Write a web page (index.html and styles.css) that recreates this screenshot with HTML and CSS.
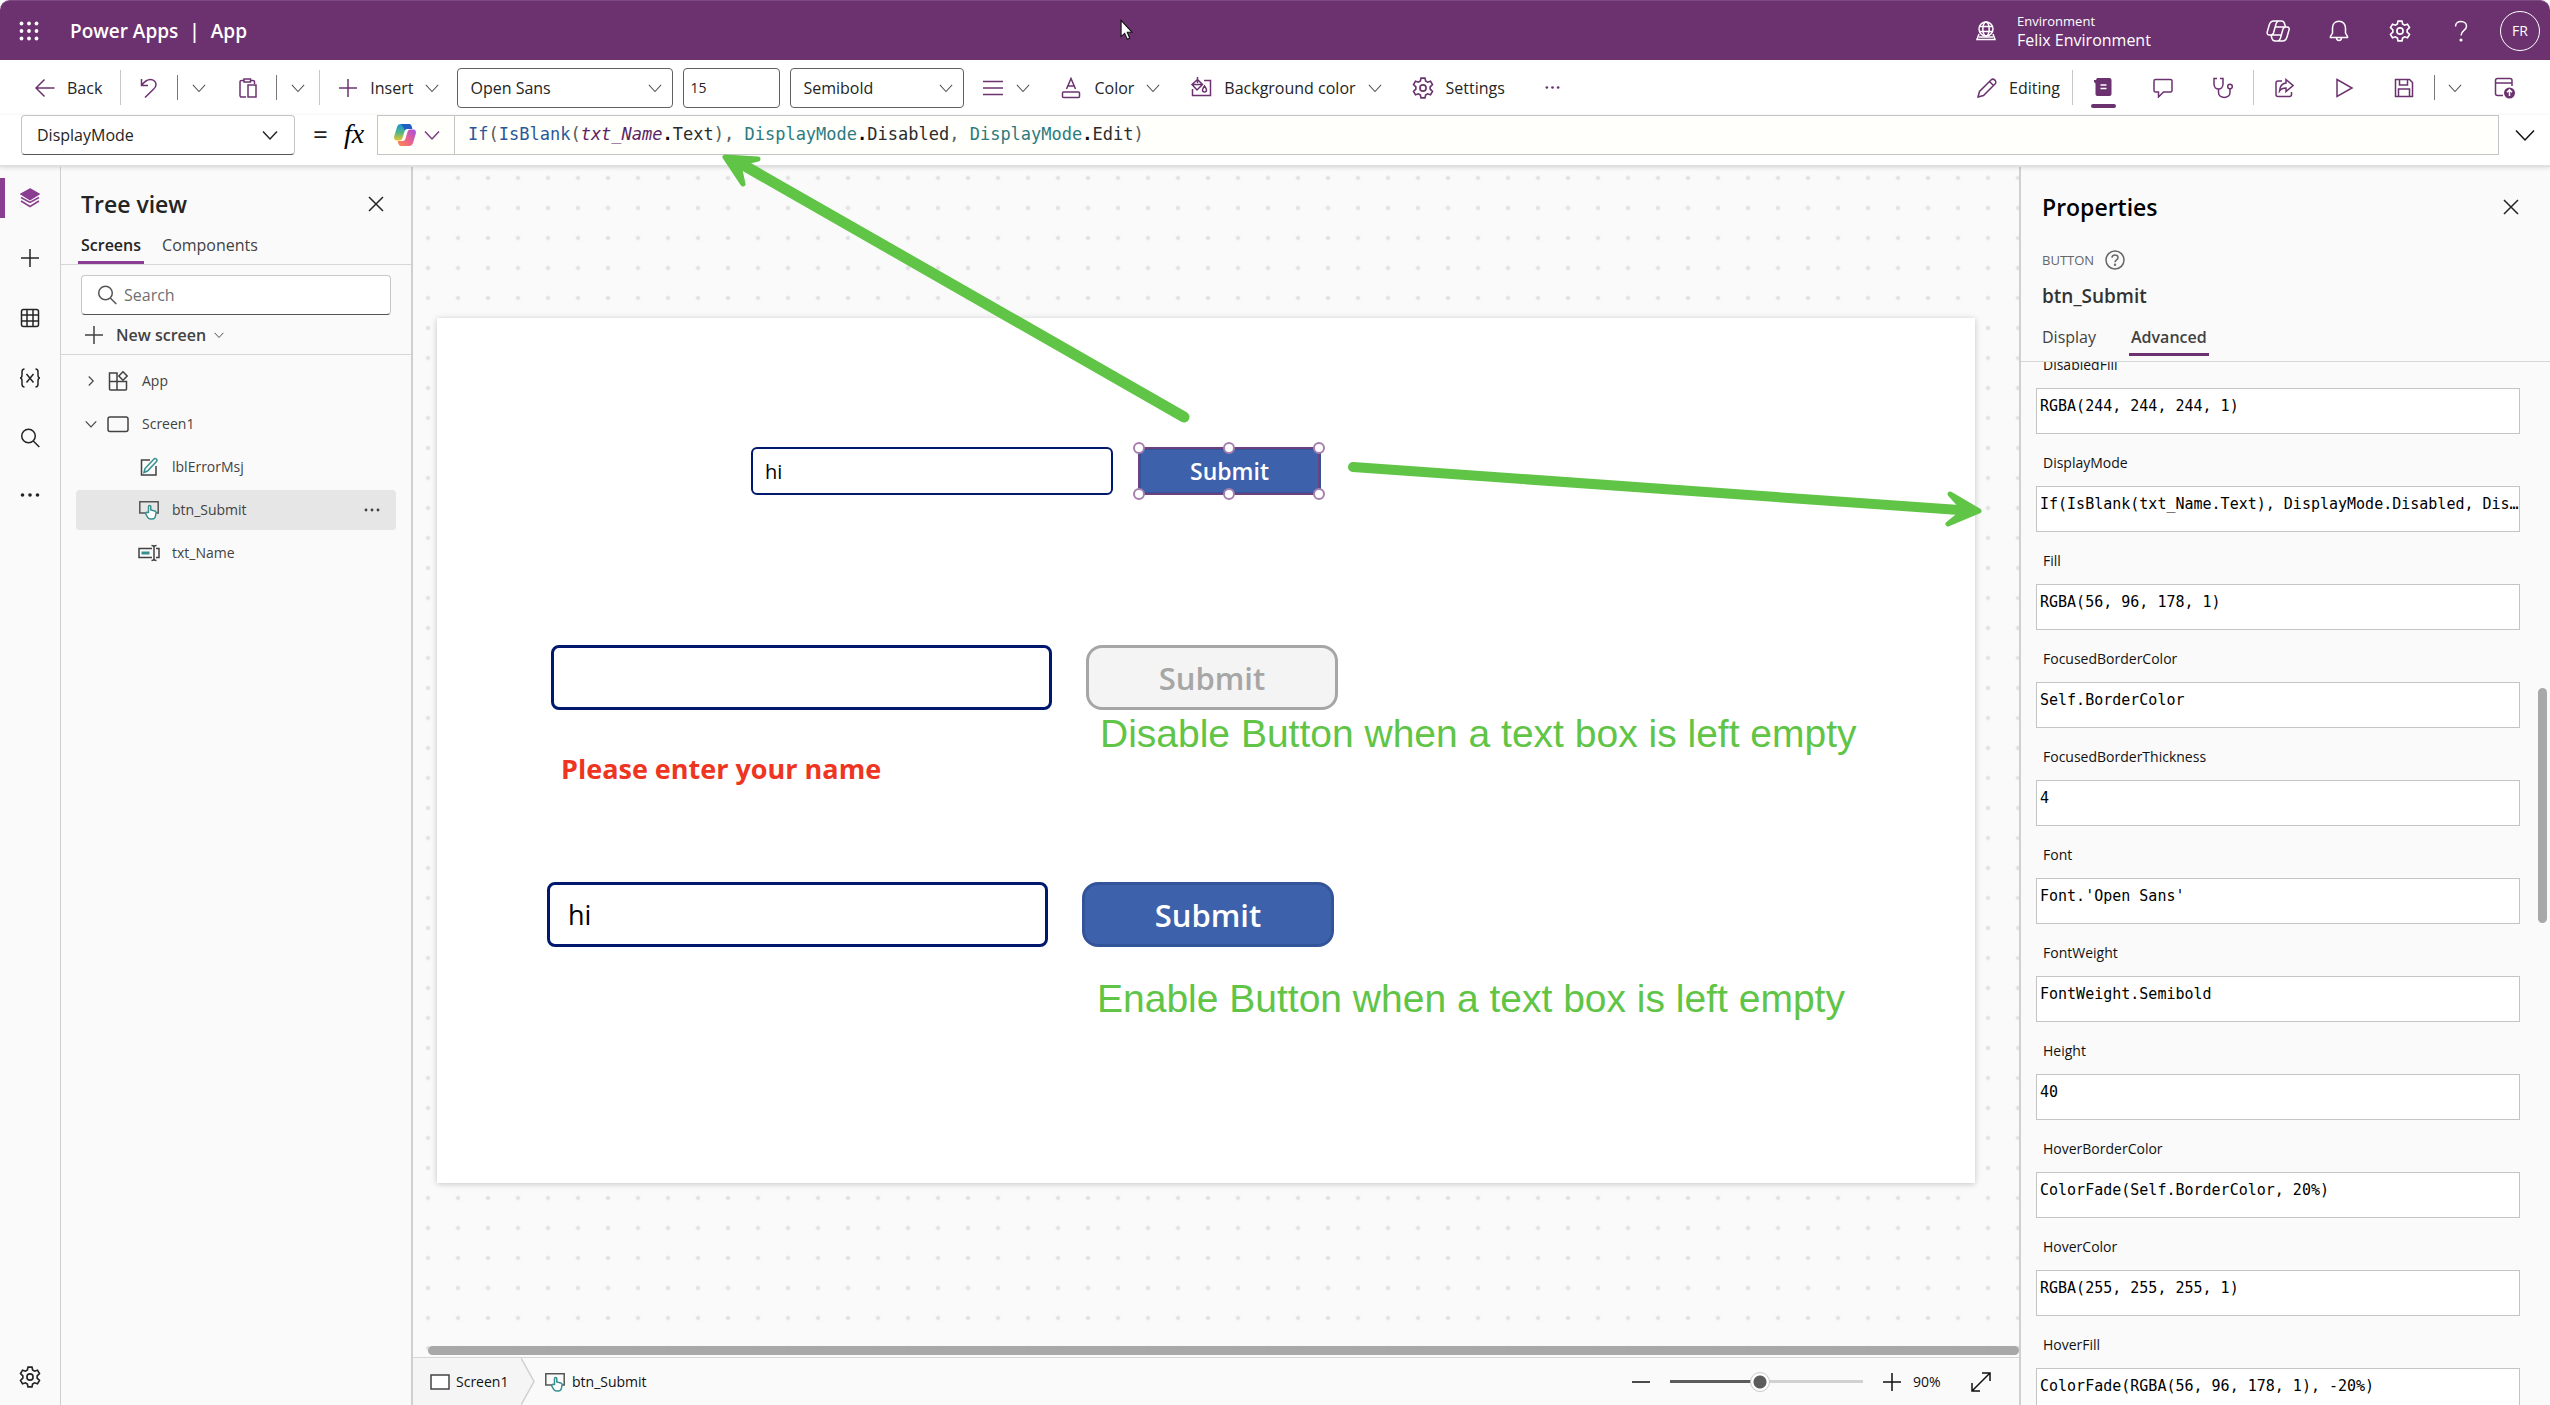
FILE: index.html
```html
<!DOCTYPE html>
<html lang="en">
<head>
<meta charset="utf-8">
<title>Power Apps | App</title>
<link rel="stylesheet" href="styles.css">
</head>
<body>
<svg class="sprite" aria-hidden="true">
  <symbol id="chev" viewBox="0 0 16 16"><path d="M1 4.500 8 12l7-7.500"/></symbol>
  <symbol id="chev-r" viewBox="0 0 16 16"><path d="M5 2l6 6-6 6"/></symbol>
  <symbol id="plus" viewBox="0 0 20 20"><path d="M10 1v18M1 10h18"/></symbol>
  <symbol id="close" viewBox="0 0 16 16"><path d="M1 1l14 14M15 1 1 15"/></symbol>
  <symbol id="glass" viewBox="0 0 20 20"><circle cx="8.500" cy="8" r="6.800"/><path d="M13.300 13l6 6"/></symbol>
  <symbol id="dots" viewBox="0 0 20 20"><g fill="currentColor" stroke="none"><circle cx="2.500" cy="10" r="1.800"/><circle cx="10" cy="10" r="1.800"/><circle cx="17.500" cy="10" r="1.800"/></g></symbol>
  <symbol id="gear" viewBox="0 0 20 20"><path d="M8.200 1h3.600l.6 2.700 1.700 1 2.700-.9 1.800 3.200-2.100 1.900v2.200l2.100 1.900-1.800 3.200-2.700-.9-1.700 1-.6 2.700H8.200l-.6-2.700-1.700-1-2.700.9L1.400 13l2.100-1.900V8.900L1.400 7l1.800-3.200 2.700.9 1.700-1z"/><circle cx="10" cy="10" r="2.800"/></symbol>
  <symbol id="tap" viewBox="0 0 20 20"><path d="M7 13H.8V1.800h18.400V13H17" stroke="#555"/><path d="M9.500 12.500V6.800c0-1.700 2.300-1.700 2.300 0V10l4 .9c.9.200 1.300.9 1.200 1.800l-.5 3.300c-.3 1.800-1.500 3-3.300 3h-1.500c-1.300 0-2.300-.6-3-1.700l-2-3.300c-.5-1.200.7-2 1.600-1.400z" stroke="#35908e" fill="#fff"/></symbol>
</svg>

<div class="app">
<header class="top">
  <button class="waffle" aria-label="App launcher"><svg width="20" height="20" viewBox="0 0 20 20"><g fill="#fff" stroke="none"><circle cx="2.500" cy="2.500" r="1.900"/><circle cx="10" cy="2.500" r="1.900"/><circle cx="17.500" cy="2.500" r="1.900"/><circle cx="2.500" cy="10" r="1.900"/><circle cx="10" cy="10" r="1.900"/><circle cx="17.500" cy="10" r="1.900"/><circle cx="2.500" cy="17.500" r="1.900"/><circle cx="10" cy="17.500" r="1.900"/><circle cx="17.500" cy="17.500" r="1.900"/></g></svg></button>
  <h1 class="brand"><span>Power Apps</span><span>|</span><span>App</span></h1>
  <div class="env">
    <svg width="22" height="20" viewBox="0 0 22 20"><circle cx="11" cy="8" r="7"/><ellipse cx="11" cy="8" rx="3.200" ry="7"/><path d="M4.300 5.500h13.400M4.300 10.500h13.400M4 13l-2 5.500h18L18 13M4 16h14"/></svg>
    <div class="env-text"><span class="env-cap">Environment</span><span>Felix Environment</span></div>
  </div>
  <button class="top-btn" aria-label="Copilot"><svg width="24" height="22" viewBox="0 0 24 22"><path d="M9 1h6.500c2 0 2.500 1 3 2.500l1 3.500h1.500c2 0 2.500 1.500 2 3l-2 7c-.7 2.500-2 4-4.500 4H9c-2 0-2.500-1-3-2.500L5 15H3.500c-2 0-2.700-1.500-2.200-3.200l2-7C4 2.500 5.500 1 8 1h1M12.500 1c-1.500.5-2 1.500-2.500 3L7.500 13c-.4 1.300-1 2-2.500 2M19.500 7c-1.500 0-2 .7-2.500 2l-2.500 9c-.5 1.500-1 2.500-2.500 3M9.500 7h10M5 15h10"/></svg></button>
  <button class="top-btn" aria-label="Notifications"><svg width="20" height="22" viewBox="0 0 20 22"><path d="M10 1.200c-4 0-6.500 3-6.500 6.800v5L1.500 16.500v1h17v-1L16.500 13V8c0-3.800-2.500-6.800-6.500-6.800zM7.500 17.500c0 1.700 1 3 2.500 3s2.500-1.300 2.500-3"/></svg></button>
  <button class="top-btn" aria-label="Settings"><svg width="22" height="22"><use href="#gear"/></svg></button>
  <button class="top-btn" aria-label="Help"><svg width="16" height="22" viewBox="0 0 16 22"><path d="M2.500 6.500c0-3.300 2.300-5 5.500-5s5.500 2 5.500 4.800c0 4.200-5.500 4.200-5.500 9.200"/><circle cx="8" cy="20" r=".8" fill="#fff"/></svg></button>
  <button class="avatar" aria-label="Account">FR</button>
</header>

<div class="toolbar">
  <button class="tool"><svg width="20" height="20" viewBox="0 0 20 20"><path d="M19.500 10H1M9.500 1.500 1 10l8.500 8.500"/></svg>Back</button>
  <i class="sep"></i>
  <button class="tool" aria-label="Undo"><svg width="20" height="20" viewBox="0 0 20 20"><path d="M2.500 1v6.500H9M2.500 7.500C5 4 8 1.500 11.500 1.500c3 0 5.500 2.200 5.500 5 0 2-1 3.300-2.300 4.500L6 19.500"/></svg></button>
  <i class="sep short"></i>
  <button class="drop" aria-label="Undo options"><svg width="14" height="14"><use href="#chev"/></svg></button>
  <button class="tool" aria-label="Paste"><svg width="20" height="20" viewBox="0 0 20 20"><path d="M8 19H3.500c-.8 0-1.500-.6-1.500-1.400V3.800c0-.8.700-1.400 1.500-1.400H6M12.500 2.400H15c.8 0 1.500.6 1.500 1.400V6M6 1h6.500v3H6zM10 7h8v12h-8z"/></svg></button>
  <i class="sep short"></i>
  <button class="drop" aria-label="Paste options"><svg width="14" height="14"><use href="#chev"/></svg></button>
  <i class="sep"></i>
  <button class="tool"><svg width="20" height="20"><use href="#plus"/></svg>Insert<svg class="gray" width="14" height="14"><use href="#chev"/></svg></button>
  <div class="fields">
    <div class="select wide"><select aria-label="Font"><option>Open Sans</option></select><svg width="14" height="14"><use href="#chev"/></svg></div>
    <input class="size" aria-label="Font size" value="15">
    <div class="select mid"><select aria-label="Font weight"><option>Semibold</option></select><svg width="14" height="14"><use href="#chev"/></svg></div>
  </div>
  <div class="format">
    <button aria-label="Align"><svg width="22" height="20" viewBox="0 0 22 20"><path d="M1 3.500h20M1 10h20M1 16.500h20"/></svg><svg class="gray" width="14" height="14"><use href="#chev"/></svg></button>
    <button><svg width="22" height="22" viewBox="0 0 22 22"><path d="M6.500 12 11 1.500 15.500 12M8 9h6"/><rect x="2.500" y="15" width="17" height="5.500" rx="1"/></svg>Color<svg class="gray" width="14" height="14"><use href="#chev"/></svg></button>
    <button><svg width="22" height="22" viewBox="0 0 22 22"><path d="M14 3.500h6.500v15h-18V12M7.500 0v6M2 7.500l5.500-5 5 5-5.500 5.500zM2 7.500h10"/><path d="M14.500 9c1.300 1.800 2 3 2 4a2 2 0 0 1-4 0c0-1 .7-2.200 2-4z"/></svg>Background color<svg class="gray" width="14" height="14"><use href="#chev"/></svg></button>
    <button><svg width="22" height="22"><use href="#gear"/></svg>Settings</button>
    <button class="more" aria-label="More"><svg width="15" height="15"><use href="#dots"/></svg></button>
  </div>
  <button class="editing"><svg width="20" height="20" viewBox="0 0 20 20"><path d="M1 19l1.500-5.500L14 2c2.500-2.500 6.500 1.500 4 4L6.500 17.500zM12.500 3.500l4 4"/></svg>Editing</button>
  <i class="sep"></i>
  <button class="tool-icon on" aria-label="Formula bar"><svg width="20" height="20" viewBox="0 0 20 20"><path d="M4 1h12.500c1 0 2 .8 2 2v14c0 1.200-1 2-2 2h-12c-1.200 0-2-.8-2-2V6.500L1 5V3h2z" fill="#6c3270" stroke="none"/><path d="M7.500 8h6M7.500 11.500h6" stroke="#fff"/></svg></button>
  <button class="tool-icon" aria-label="Comments"><svg width="20" height="20" viewBox="0 0 20 20"><path d="M2.500 1.500h15c.8 0 1.500.7 1.500 1.500v9.500c0 .8-.7 1.500-1.500 1.500h-7L5.500 19v-5h-3c-.8 0-1.500-.7-1.500-1.500V3c0-.8.700-1.500 1.500-1.500z"/></svg></button>
  <button class="tool-icon" aria-label="App checker"><svg width="22" height="22" viewBox="0 0 22 22"><path d="M5 1.500H2v5.500c0 3 2 5 4.500 5s4.500-2 4.500-5V1.500H8M6.500 12v3.500c0 6.500 11.500 6.500 11.500 0V12"/><circle cx="18" cy="9.500" r="2.300"/></svg></button>
  <i class="sep"></i>
  <button class="tool-icon" aria-label="Share"><svg width="20" height="20" viewBox="0 0 20 20"><path d="M8 3H4C2.800 3 2 3.800 2 5v11.500c0 1.200.8 2 2 2h11.500c1.200 0 2-.8 2-2V14M12 1.500l7 6-7 6V10c-3 0-5 .8-6.500 3 .3-4.500 2.500-7.500 6.500-8z"/></svg></button>
  <button class="tool-icon" aria-label="Preview"><svg width="20" height="20" viewBox="0 0 20 20"><path d="M3 1.500 18 10 3 18.500z"/></svg></button>
  <button class="tool-icon" aria-label="Save"><svg width="20" height="20" viewBox="0 0 20 20"><path d="M1.500 1.500h14L18.500 4.500v14h-17zM5.500 1.500v5.500h8V1.500M4.500 18.500V11h11v7.500"/></svg></button>
  <i class="sep short"></i>
  <button class="tool-icon narrow" aria-label="Save options"><svg class="gray" width="14" height="14"><use href="#chev"/></svg></button>
  <button class="tool-icon" aria-label="Publish"><svg width="22" height="22" viewBox="0 0 22 22"><path d="M9 18.500H3.500c-1 0-2-.8-2-2V3.500c0-1 .8-2 2-2h12.500c1.200 0 2 1 2 2V9M1.500 6H18"/><circle cx="15.500" cy="16" r="5.500" fill="#6c3270" stroke="none"/><path d="M15.500 19v-6M13 15.300l2.500-2.500 2.500 2.500" stroke="#fff"/></svg></button>
</div>

<div class="formula">
  <div class="select prop"><select aria-label="Property"><option>DisplayMode</option></select><svg width="16" height="16"><use href="#chev"/></svg></div>
  <div class="eq"><span>=</span><span class="fx">fx</span></div>
  <div class="bar">
    <button class="copilot" aria-label="Copilot"><svg width="24" height="24" viewBox="0 0 24 24"><defs><linearGradient id="ca" x1="0" y1="0" x2="0" y2="1"><stop offset="0" stop-color="#1b8fd8"/><stop offset=".5" stop-color="#4fb58a"/><stop offset="1" stop-color="#e8c62c"/></linearGradient><linearGradient id="cb" x1="1" y1="0" x2="0" y2="1"><stop offset="0" stop-color="#a050e8"/><stop offset=".5" stop-color="#e8608f"/><stop offset="1" stop-color="#ff8a4a"/></linearGradient></defs><path d="M8 1h8c1.500 0 2.200 1 2.600 2.500L19.300 6H14c-1.500 0-2 1-2.500 2.500L9.500 15c-.5 1.500-1 2.500-3 2.500H4.500C1.500 17.500.5 15.500 1.300 13L4 4c.7-2 2-3 4-3z" fill="url(#ca)" stroke="none"/><path d="M8 1h8c1.500 0 2.200 1 2.600 2.500L19.300 6H14c-1 0-1.700.5-2 1.500L9.500 3z" fill="#1f5fc4" stroke="none"/><path d="M16 23H8c-1.500 0-2.200-1-2.600-2.500L4.700 18H10c1.500 0 2-1 2.500-2.500L14.500 9c.5-1.500 1-2.500 3-2.500h2c3 0 4 2 3.200 4.500L20 20c-.7 2-2 3-4 3z" fill="url(#cb)" stroke="none"/></svg><svg width="16" height="16"><use href="#chev"/></svg></button>
    <div class="code" role="textbox" aria-label="Formula"><span class="fn">If</span>(<span class="fn">IsBlank</span>(<span class="id">txt_Name</span><b>.</b><span class="m">Text</span>), <span class="en">DisplayMode</span><b>.</b><span class="m">Disabled</span>, <span class="en">DisplayMode</span><b>.</b><span class="m">Edit</span>)</div>
  </div>
  <button class="expand" aria-label="Expand formula bar"><svg width="20" height="20" viewBox="0 0 20 20"><path d="M1 5.500 10 15l9-9.500"/></svg></button>
</div>

<div class="work">
  <nav class="rail" aria-label="Panes">
    <button class="on" aria-label="Tree view"><svg width="20" height="20" viewBox="0 0 20 20"><path d="M10 1 19 6l-9 5.500L1 6z" fill="currentColor"/><path d="M1 9.500l9 5 9-5M1 13l9 5.500 9-5.500"/></svg></button>
    <button aria-label="Insert"><svg width="20" height="20"><use href="#plus"/></svg></button>
    <button aria-label="Data"><svg width="20" height="20" viewBox="0 0 20 20"><rect x="1.500" y="1.500" width="17" height="17" rx="2"/><path d="M7 1.500v17M13 1.500v17M1.500 7h17M1.500 13h17"/></svg></button>
    <button aria-label="Variables"><svg width="22" height="20" viewBox="0 0 22 20"><path d="M5.500 1C3 1 3 2.500 3 4v3c0 2-1 3-2 3 1 0 2 1 2 3v3c0 1.500 0 3 2.500 3M16.500 1C19 1 19 2.500 19 4v3c0 2 1 3 2 3-1 0-2 1-2 3v3c0 1.500 0 3-2.500 3M7.500 6l7 8.500M14.500 6l-7 8.500"/></svg></button>
    <button aria-label="Search"><svg width="20" height="20"><use href="#glass"/></svg></button>
    <button class="etc" aria-label="More"><svg width="20" height="20"><use href="#dots"/></svg></button>
    <button class="last" aria-label="Settings"><svg width="22" height="22"><use href="#gear"/></svg></button>
  </nav>

  <aside class="tree">
    <div class="head"><h2>Tree view</h2><button aria-label="Close tree view"><svg width="16" height="16"><use href="#close"/></svg></button></div>
    <div class="tabs"><button class="on">Screens</button><button>Components</button></div>
    <label class="search"><svg width="20" height="20"><use href="#glass"/></svg><input placeholder="Search" aria-label="Search"></label>
    <button class="new"><svg width="20" height="20"><use href="#plus"/></svg>New screen<svg width="10" height="10"><use href="#chev"/></svg></button>
    <ul class="nodes">
      <li><svg width="12" height="12"><use href="#chev-r"/></svg><svg width="22" height="20" viewBox="0 0 22 20"><path d="M2.500 2h7.500v17H3.500c-.6 0-1-.4-1-1zM2.500 10.500h17V18c0 .6-.4 1-1 1H10"/><path d="M16 .8l4.200 4.200L16 9.200 11.800 5z"/></svg><span>App</span></li>
      <li><svg width="12" height="12"><use href="#chev"/></svg><svg width="22" height="20" viewBox="0 0 22 20"><rect x="1" y="3" width="20" height="14.500" rx="2"/></svg><span>Screen1</span></li>
      <li class="child"><svg width="22" height="20" viewBox="0 0 22 20"><path d="M12 3H3.500v15H18V9"/><path d="M6 15.500l1-4L16 2c1.500-1.500 4 .8 2.500 2.500L9.500 14z" stroke="#35908e"/></svg><span>lblErrorMsj</span></li>
      <li class="child sel"><svg width="22" height="20"><use href="#tap"/></svg><span>btn_Submit</span><button aria-label="More actions"><svg width="16" height="16"><use href="#dots"/></svg></button></li>
      <li class="child"><svg width="22" height="20" viewBox="0 0 22 20"><path d="M14 5.500H1v9h13M18 5.500h3v9h-3M16 4v12M13.500 2.500c1.500 0 2.500.5 2.500 1.500 0-1 1-1.500 2.500-1.500M13.500 17.500c1.500 0 2.500-.5 2.500-1.500 0 1 1 1.500 2.500 1.500"/><path d="M3.500 10h8" stroke="#35908e" stroke-width="3"/></svg><span>txt_Name</span></li>
    </ul>
  </aside>

  <main class="stage">
    <div class="dots">
      <div class="screen">
        <input class="box small" aria-label="Name" value="hi">
        <button class="submit small">Submit</button>
        <svg class="handles" width="196" height="62" viewBox="0 0 196 62"><rect x="8" y="8" width="180" height="46" rx="4" stroke="#6d417f"/><g fill="#fff" stroke="#a67fad"><circle cx="8" cy="8" r="5"/><circle cx="98" cy="8" r="5"/><circle cx="188" cy="8" r="5"/><circle cx="8" cy="54" r="5"/><circle cx="98" cy="54" r="5"/><circle cx="188" cy="54" r="5"/></g></svg>
        <input class="box empty" aria-label="Name, empty">
        <button class="submit off" disabled>Submit</button>
        <p class="error">Please enter your name</p>
        <p class="note first">Disable Button when a text box is left empty</p>
        <input class="box filled" aria-label="Name, filled" value="hi">
        <button class="submit ready">Submit</button>
        <p class="note second">Enable Button when a text box is left empty</p>
      </div>
      <div class="hscroll"></div>
    </div>
    <footer class="status">
      <a class="crumb" href="#"><svg width="20" height="16" viewBox="0 0 20 16"><rect x="1" y="1" width="18" height="14" fill="#fff" stroke="#444"/></svg>Screen1</a>
      <svg class="wedge" width="14" height="47" viewBox="0 0 14 47"><path d="M0 0l13 23.500L0 47z" fill="#f5f5f5" stroke="none"/><path d="M0 0l13 23.500L0 47" stroke="#d0d0d0"/></svg>
      <a class="crumb cur" href="#"><svg width="20" height="20"><use href="#tap"/></svg>btn_Submit</a>
      <div class="zoom">
        <button aria-label="Zoom out"><svg width="20" height="20" viewBox="0 0 20 20"><path d="M1 10h18"/></svg></button>
        <input type="range" min="0" max="100" value="46" aria-label="Zoom">
        <button aria-label="Zoom in"><svg width="20" height="20"><use href="#plus"/></svg></button>
        <span>90%</span>
        <button aria-label="Fit to window"><svg width="20" height="20" viewBox="0 0 20 20"><path d="M1 19 19 1M11 1h8v8M1 11v8h8"/></svg></button>
      </div>
    </footer>
  </main>

  <aside class="props">
    <div class="head"><h2>Properties</h2><button aria-label="Close properties"><svg width="16" height="16"><use href="#close"/></svg></button></div>
    <div class="kind">BUTTON<svg width="20" height="20" viewBox="0 0 20 20"><circle cx="10" cy="10" r="9"/><path d="M7 7.800C7 6 8.200 5 10 5s3 1.100 3 2.700c0 2.200-3 2.200-3 4.600"/><circle cx="10" cy="14.800" r=".5"/></svg></div>
    <h3>btn_Submit</h3>
    <div class="tabs"><button>Display</button><button class="on">Advanced</button></div>
    <div class="scroll">
      <div class="list">
        <label>DisabledFill<input value="RGBA(244, 244, 244, 1)"></label>
        <label>DisplayMode<input value="If(IsBlank(txt_Name.Text), DisplayMode.Disabled, DisplayMode.Edit)"></label>
        <label>Fill<input value="RGBA(56, 96, 178, 1)"></label>
        <label>FocusedBorderColor<input value="Self.BorderColor"></label>
        <label>FocusedBorderThickness<input value="4"></label>
        <label>Font<input value="Font.'Open Sans'"></label>
        <label>FontWeight<input value="FontWeight.Semibold"></label>
        <label>Height<input value="40"></label>
        <label>HoverBorderColor<input value="ColorFade(Self.BorderColor, 20%)"></label>
        <label>HoverColor<input value="RGBA(255, 255, 255, 1)"></label>
        <label>HoverFill<input value="ColorFade(RGBA(56, 96, 178, 1), -20%)"></label>
      </div>
      <div class="vscroll"></div>
    </div>
  </aside>
</div>

<svg class="arrow one" width="470" height="272" viewBox="0 0 470 272"><path d="M464 265 25 14" stroke-width="11"/><path d="M5 5 38 7 25 10 20 18 23 32z" class="barb"/></svg>
<svg class="arrow two" width="636" height="76" viewBox="0 0 636 76"><path d="M5 13 611 56" stroke-width="10"/><path d="M631 57 602 40 611 50 611 61 600 70z" class="barb"/></svg>
<svg class="pointer" width="13" height="21" viewBox="0 0 12 19"><path d="M1 1v15l3.300-3 2.400 5.500 2.300-1L6.700 12H11z" fill="#fff" stroke="#111"/></svg>
</div>
</body>
</html>
```

FILE: styles.css
```css
* { box-sizing: border-box; }
body { margin: 0; font-family: "Open Sans", "Noto Sans", sans-serif; font-size: 16px; line-height: 20px; color: #242424; background: #fafafa; }
button { font: inherit; color: inherit; background: none; border: 0; padding: 0; display: flex; align-items: center; }
input, select { font: inherit; color: inherit; border: 0; background: none; outline: 0; min-width: 0; }
h1, h2, h3, p, ul { margin: 0; padding: 0; list-style: none; }
svg { flex: none; fill: none; stroke: currentColor; stroke-width: 1.5; }
.sprite { position: absolute; width: 0; height: 0; }
.app { position: relative; display: flex; flex-direction: column; height: 100vh; overflow: hidden; }

/* purple title bar */
.top { flex: none; display: flex; align-items: center; height: 60px; padding: 0 10px 0 19px; color: #fff; background: #6c3270; border-top: 1px solid #7d4a81; border-radius: 10px 10px 0 0; }
.brand { display: flex; gap: 11px; margin-left: 31px; font-size: 19px; font-weight: 600; }
.env { display: flex; align-items: center; gap: 20px; margin-left: auto; }
.env-text { display: flex; flex-direction: column; width: 230px; font-size: 16px; }
.env-cap { font-size: 13px; line-height: 18px; }
.top-btn { justify-content: center; width: 61px; height: 59px; }
.avatar { justify-content: center; width: 40px; height: 40px; margin-left: 9px; font-size: 14px; border: 1px solid #fff; border-radius: 50%; }

/* command bar */
.toolbar { flex: none; display: flex; align-items: center; height: 55px; padding: 0 15px 0 17px; background: #fff; }
.toolbar svg { color: #6c3270; }
.toolbar .drop svg, .toolbar .select svg, .toolbar svg.gray { color: #555; stroke-width: 1.2; }
.sep { flex: none; width: 1px; height: 35px; background: #c8c8c8; }
.sep.short { height: 25px; background: #777; }
.tool { gap: 12px; padding: 0 18px; }
.drop { padding: 0 14px; }
.fields { display: flex; gap: 10px; align-items: center; }
.select { display: grid; align-items: center; background: #fff; border: 1px solid #616161; border-radius: 4px; height: 40px; }
.select > * { grid-area: 1 / 1; }
.select select { appearance: none; height: 38px; padding: 0 30px 0 12px; }
.select svg { justify-self: end; margin-right: 10px; pointer-events: none; }
.select.wide { width: 216px; }
.select.mid { width: 174px; }
.size { width: 97px; height: 40px; padding: 0 6px; font-size: 14px; border: 1px solid #616161; border-radius: 4px; }
.format { display: flex; gap: 30px; padding-left: 18px; }
.format button { gap: 12px; }
.format .more { padding-left: 10px; }
.editing { gap: 12px; margin-left: auto; padding-right: 12px; }
.tool-icon { justify-content: center; width: 60px; height: 46px; }
.tool-icon.narrow { width: 40px; }
.tool-icon.on { flex-direction: column; gap: 7px; padding-top: 10px; }
.tool-icon.on::after { content: ""; width: 25px; height: 4px; border-radius: 2px; background: #6c3270; }

/* formula bar */
.formula { flex: none; position: relative; display: flex; height: 52px; padding: 0 0 12px 21px; background: #fff; border-bottom: 2px solid #e0e0e0; box-shadow: 0 1px 4px rgba(0,0,0,.12); }
.select.prop { width: 274px; border-color: #c4c4c4; border-bottom-color: #555; }
.select.prop select { padding-left: 15px; }
.select.prop svg { margin-right: 16px; }
.eq { display: flex; align-items: center; gap: 16px; width: 82px; padding-left: 18px; font-size: 26px; }
.fx { font: italic 28px/32px "Liberation Serif", serif; color: #000; }
.bar { flex: 1; display: flex; height: 40px; background: #fffffc; border: 1px solid #c4c4c4; }
.copilot { justify-content: center; gap: 7px; width: 77px; border-right: 1px solid #c4c4c4; color: #7d3a86; }
.code { padding: 8px 13px; font: 17px/20px "DejaVu Sans Mono", monospace; color: #5a5a5a; white-space: pre; }
.fn { color: #2b579a; }
.id { color: #5c2464; font-style: italic; }
.en { color: #2d7a80; }
.m { color: #2b2b2b; }
.code b { color: #000; }
.expand { justify-content: center; width: 51px; height: 40px; color: #111; }

/* work area */
.work { flex: 1; display: flex; min-height: 0; }
.rail { flex: none; display: flex; flex-direction: column; width: 61px; padding-top: 1px; border-right: 1px solid #d0d0d0; }
.rail button { justify-content: center; height: 60px; border-left: 5px solid transparent; border-right: 5px solid transparent; }
.rail .on { color: #8a3d91; background: linear-gradient(#8a3d91, #8a3d91) left center / 5px 40px no-repeat border-box; }
.rail .etc { height: 54px; }
.rail .last { margin-top: auto; height: 56px; }
.head { display: flex; align-items: center; justify-content: space-between; height: 60px; }
h2 { font-size: 23px; line-height: 30px; font-weight: 600; }
.tabs { display: flex; border-bottom: 1px solid #d6d6d6; }
.tree { flex: none; width: 352px; padding-top: 7px; border-right: 2px solid #d0d0d0; }
.tree .head { padding: 0 27px 0 20px; }
.tree .tabs { gap: 15px; height: 31px; padding-left: 17px; color: #424242; }
.tree .tabs button { padding: 0 3px 6px; border-bottom: 3px solid transparent; }
.tree .tabs .on { font-weight: 600; color: #242424; border-color: #8a3d91; }
.search { display: flex; align-items: center; gap: 5px; height: 40px; margin: 10px 20px 0; padding-left: 15px; background: #fff; border: 1px solid #c8c8c8; border-bottom-color: #555; border-radius: 4px; color: #555; }
.search input { flex: 1; }
.search input::placeholder { color: #707070; opacity: 1; }
.new { gap: 12px; width: 100%; height: 40px; padding: 0 23px; font-weight: 600; color: #424242; border-bottom: 1px solid #d6d6d6; }
.new svg:last-child { margin-left: -4px; }
.nodes { display: flex; flex-direction: column; gap: 3px; padding: 6px 15px; font-size: 14px; color: #424242; }
.nodes li { display: flex; align-items: center; gap: 13px; height: 40px; padding: 0 16px 0 9px; }
.nodes li > svg:nth-child(2) { margin-left: -3px; }
.nodes li.child { padding-left: 62px; gap: 12px; }
.nodes .sel { background: #e6e6e6; border-radius: 4px; }
.nodes li button { margin-left: auto; }

/* canvas */
.stage { flex: 1; display: flex; flex-direction: column; min-width: 0; }
.dots { flex: 1; display: flex; flex-direction: column; justify-content: space-between; padding: 151px 0 2px; background: radial-gradient(circle, #e0e0e0 0 1px, transparent 3px) 0 -4px / 30px 30px; }
.screen { position: relative; height: 865px; margin: 0 44px 0 24px; background: #fff; box-shadow: 0 1px 6px rgba(0,0,0,.22); }
.screen > * { position: absolute; }
.box { left: 110px; width: 501px; height: 65px; padding: 0 18px; font-size: 27px; color: #000; background: #fff; border: 3px solid #00186e; border-radius: 8px; }
.box.small { left: 314px; top: 129px; width: 362px; height: 48px; padding: 0 12px; font-size: 20px; border-width: 2px; border-radius: 6px; }
.box.empty { left: 114px; top: 327px; }
.box.filled { top: 564px; }
.submit { justify-content: center; width: 252px; height: 65px; font-size: 31px; font-weight: 600; color: #fff; background: #3e61ac; border: 3px solid #34549a; border-radius: 16px; }
.submit.small { left: 701px; top: 129px; width: 183px; height: 48px; font-size: 23px; border-radius: 5px; }
.submit.off { left: 649px; top: 327px; color: #a6a6a6; background: #f4f4f4; border-color: #a6a6a6; }
.submit.ready { left: 645px; top: 564px; }
.handles { left: 694px; top: 122px; stroke-width: 2; }
.error { left: 124px; top: 434px; font-size: 27px; line-height: 34px; font-weight: 700; color: #ee3522; }
.note { font: 39px/48px "Liberation Sans", sans-serif; color: #60c446; white-space: nowrap; }
.note.first { left: 663px; top: 392px; }
.note.second { left: 660px; top: 657px; }
.hscroll { height: 9px; margin-left: 15px; border-radius: 5px; background: #a8a8a8; }

/* status bar */
.status { flex: none; display: flex; height: 48px; border-top: 1px solid #d6d6d6; font-size: 14px; color: #111; }
.crumb { display: flex; align-items: center; gap: 6px; width: 108px; padding-left: 17px; color: inherit; text-decoration: none; background: #f5f5f5; }
.crumb.cur { gap: 7px; width: auto; padding-left: 10px; background: none; }
.zoom { display: flex; align-items: center; margin-left: auto; padding-right: 28px; }
.zoom input { appearance: none; width: 193px; height: 20px; margin: 0 19px; background: linear-gradient(90deg, #5c5c5c 46%, #d1d1d1 46%) center / 100% 3px no-repeat; }
.zoom input::-webkit-slider-thumb { appearance: none; width: 20px; height: 20px; border-radius: 50%; border: 1px solid #c8c8c8; background: radial-gradient(circle, #5c5c5c 6px, #fff 7px); }
.zoom span { width: 69px; padding-left: 11px; }

/* properties */
.props { flex: none; display: flex; flex-direction: column; width: 531px; padding-top: 11px; border-left: 2px solid #d0d0d0; }
.props .head { flex: none; padding: 0 31px 3px 21px; }
.props h2 { color: #000; }
.kind { flex: none; display: flex; align-items: center; gap: 11px; height: 44px; padding-left: 21px; font-size: 13px; color: #666; }
h3 { padding-left: 21px; font-size: 19px; line-height: 28px; font-weight: 600; color: #333; }
.props .tabs { flex: none; gap: 31px; height: 52px; padding: 0 19px 5px; color: #424242; }
.props .tabs button { padding: 10px 2px 0; border-bottom: 3px solid transparent; }
.props .tabs .on { font-weight: 600; border-color: #6c3270; }
.scroll { flex: 1; display: flex; min-height: 0; overflow: hidden; }
.list { width: 499px; padding-left: 15px; margin-top: -26px; }
.list label { display: block; padding-top: 19px; font-size: 14px; color: #111; text-indent: 7px; }
.list input { display: block; width: 100%; height: 46px; margin-top: 13px; padding: 0 0 10px 3px; font: 15px/18px "DejaVu Sans Mono", monospace; color: #000; text-indent: 0; text-overflow: ellipsis; background: #fff; border: 1px solid #c4c4c4; }
.vscroll { width: 9px; height: 235px; margin: 326px 0 0 18px; border-radius: 5px; background: #a8a8a8; }

/* annotations laid over the editor */
.arrow { position: absolute; pointer-events: none; stroke: #60c446; stroke-linecap: round; stroke-linejoin: round; }
.arrow.one { left: 720px; top: 152px; }
.arrow.two { left: 1348px; top: 454px; }
.barb { fill: #60c446; stroke-width: 5; }
.pointer { position: absolute; left: 1120px; top: 19px; stroke-width: 1; }
```
